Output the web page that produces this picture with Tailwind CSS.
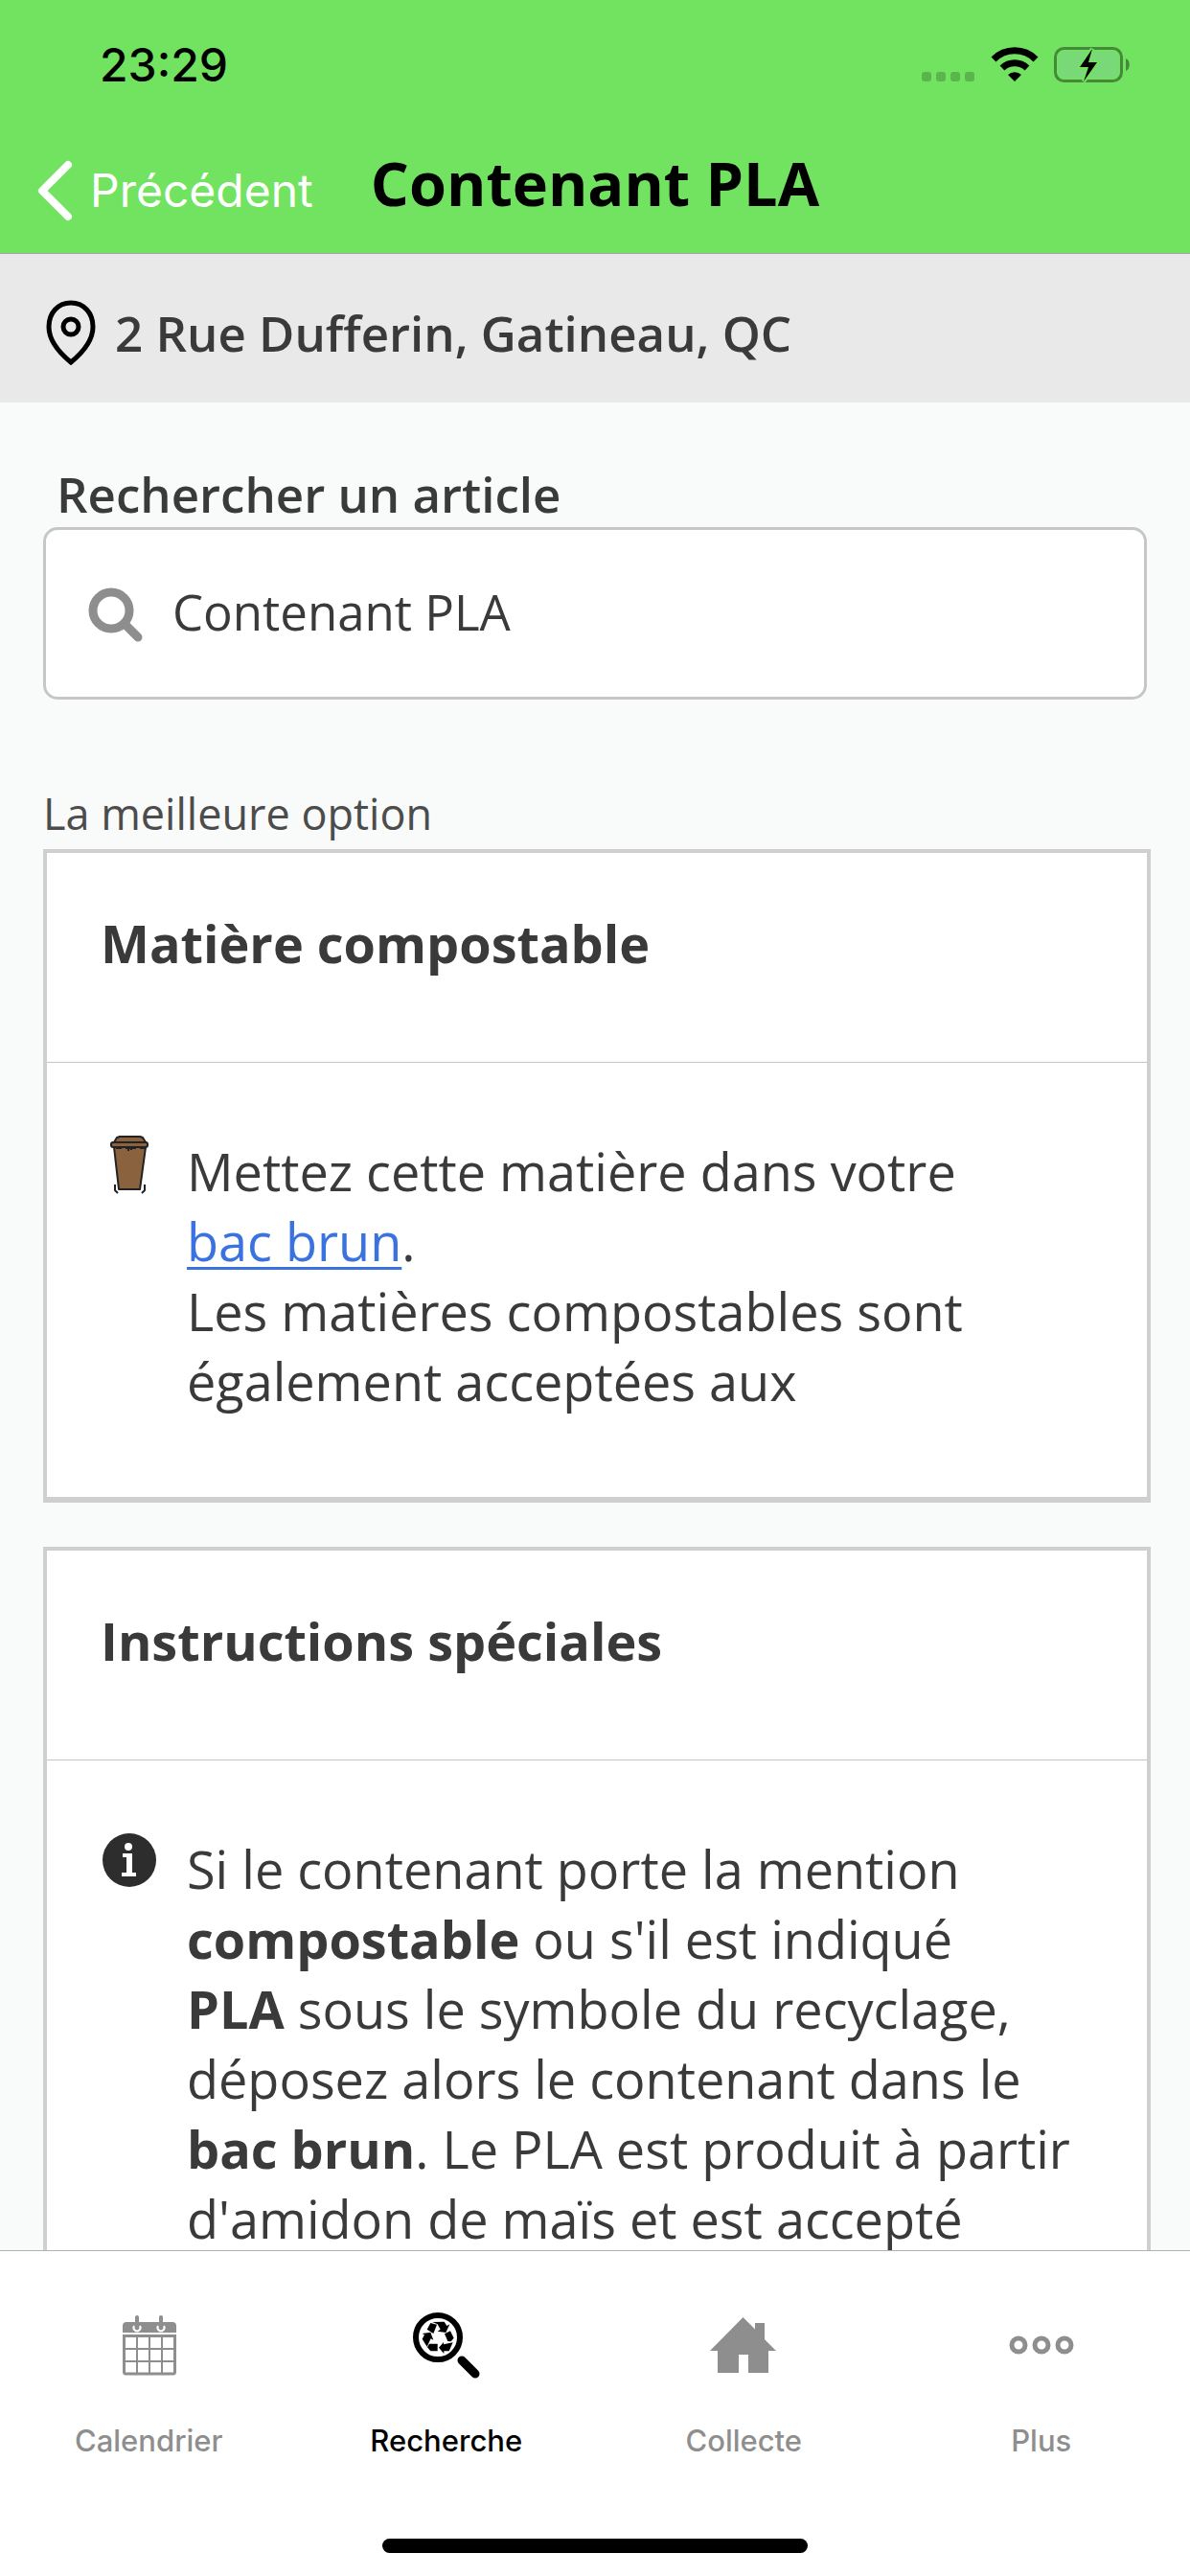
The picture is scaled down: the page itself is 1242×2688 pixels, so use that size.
<!DOCTYPE html>
<html lang="fr">
<head>
    <meta charset="UTF-8">
    <meta name="viewport" content="width=device-width, initial-scale=1.0">
    <title>Contenant PLA</title>
    <script src="https://cdn.jsdelivr.net/npm/@tailwindcss/browser@4"></script>
</head>
<body class="h-screen flex flex-col overflow-hidden bg-[#f9fbfa] text-[#3a3a3a] font-['Open_Sans','Noto_Sans',sans-serif]">
    <!-- Header -->
    <header class="shrink-0 bg-[#72e360] border-b border-[#a5a5a5] text-black">
        <div class="h-[132px] pt-1 pl-[104px] pr-[62px] flex items-center justify-between">
            <span class="text-[48px] leading-[60px] font-medium font-['Inter',sans-serif]">23:29</span>
            <div class="flex items-center gap-4">
                <svg class="w-[56px] h-[44px]" viewBox="0 0 56 44" fill="#5bb54d">
                    <rect x="0" y="29" width="10" height="10" rx="3"/>
                    <rect x="15" y="29" width="10" height="10" rx="3"/>
                    <rect x="30" y="29" width="10" height="10" rx="3"/>
                    <rect x="45" y="29" width="10" height="10" rx="3"/>
                </svg>
                <svg class="w-[50px] h-[44px]" viewBox="0 0 50 44">
                    <path d="M3 16a31 31 0 0 1 44 0" fill="none" stroke="#000" stroke-width="7"/>
                    <path d="M12 25a19 19 0 0 1 26 0" fill="none" stroke="#000" stroke-width="7"/>
                    <path d="M25 39l-7-7a10 10 0 0 1 14 0z"/>
                </svg>
                <svg class="w-[80px] h-[44px]" viewBox="0 0 80 44">
                    <rect x="1.500" y="4.500" width="69" height="34" rx="9" fill="none" stroke="#458a3a" stroke-width="3"/>
                    <rect x="5" y="8" width="62" height="27" rx="6" fill="#79d878"/>
                    <path d="M75 15c5 2 5 11 0 13z" fill="#458a3a"/>
                    <path d="M40 5L27 24h9l-5 15 14-20h-9z" fill="#000" stroke="#72e360" stroke-width="4" paint-order="stroke"/>
                </svg>
            </div>
        </div>
        <div class="relative h-[132px] flex justify-center">
            <button type="button" class="absolute left-[36px] top-[32px] flex items-center gap-4 text-white text-[48px] leading-[70px] font-['Inter',sans-serif]">
                <svg class="w-[42px] h-[66px]" viewBox="0 0 42 66" fill="none" stroke="#fff" stroke-width="8" stroke-linecap="round" stroke-linejoin="round"><path d="M35 6L8 33L35 60"/></svg>
                Précédent
            </button>
            <h1 class="pt-4 text-[63px] leading-[86px] font-bold">Contenant PLA</h1>
        </div>
    </header>

    <!-- Address -->
    <div class="shrink-0 h-[155px] px-[48px] pt-2 flex items-center gap-[20px] bg-[#e9e9e9]">
        <svg class="w-[52px] h-[68px]" viewBox="0 0 52 68" fill="none" stroke="#000" stroke-width="5"><path d="M26 3C12 3 3 14 3 28c0 15 12 28 23 37 11-9 23-22 23-37C49 14 40 3 26 3z"/><circle cx="26" cy="28" r="8"/></svg>
        <p class="text-[51px] leading-[70px] font-semibold">2 Rue Dufferin, Gatineau, QC</p>
    </div>

    <main class="flex-1 min-h-0 overflow-hidden px-[45px]">
        <form class="pt-[60px]">
            <label for="search" class="block pl-[14px] text-[51px] leading-[70px] font-semibold">Rechercher un article</label>
            <div class="h-[180px] px-[44px] flex items-center gap-[30px] bg-white border-3 border-[#c6c6c6] rounded-[15px]">
                <svg class="shrink-0 w-[58px] h-[62px]" viewBox="0 0 58 62" fill="none" stroke="#8e8e8e"><circle cx="24" cy="28" r="19" stroke-width="9"/><path d="M39 43L52 56" stroke-width="9" stroke-linecap="round"/></svg>
                <input type="text" id="search" name="search" value="Contenant PLA" class="flex-1 min-w-0 pb-1 text-[51px] leading-[70px] focus:outline-none">
            </div>
        </form>

        <p class="mt-[88px] text-[45px] leading-[62px] text-[#4c4c4c]">La meilleure option</p>

        <section class="mt-[6px] -mr-[4px] bg-white border-4 border-b-6 border-[#cfcfcf]">
            <h2 class="h-[219px] px-[56px] pt-[57px] text-[54px] leading-[74px] font-bold border-b border-[#c6c6c6]">Matière compostable</h2>
            <div class="px-[58px] pt-[76px] pb-[84px] flex gap-[32px]">
                <svg class="shrink-0 w-[56px] h-[62px]" viewBox="0 0 56 62" stroke="#222" stroke-width="2" stroke-linejoin="round" fill="#8b623e">
                    <path d="M12 12l5 44h22l6-44z"/>
                    <path d="M12 7l3-5 3-1h21l3 1 3 5z"/>
                    <rect x="9" y="7" width="38" height="5" rx="2"/>
                    <path d="M14 13h6M24 13h11M39 13h6M27 13v3M30 13v2" fill="none"/>
                    <path d="M13 51v6l3 3M44 51v6l-3 3" fill="none"/>
                </svg>
                <p class="pt-px text-[54px] leading-[73px]">Mettez cette matière dans votre<br><a href="#" class="text-[#3a73e0] underline decoration-3 underline-offset-6">bac brun</a>.<br>Les matières compostables sont<br>également acceptées aux</p>
            </div>
        </section>

        <section class="mt-[46px] -mr-[4px] bg-white border-4 border-b-6 border-[#cfcfcf]">
            <h2 class="h-[219px] px-[56px] pt-[57px] text-[54px] leading-[74px] font-bold border-b border-[#c6c6c6]">Instructions spéciales</h2>
            <div class="px-[58px] pt-[76px] pb-[84px] flex gap-[32px]">
                <svg class="shrink-0 w-[56px] h-[56px]" viewBox="0 0 56 56"><circle cx="28" cy="28" r="28" fill="#2d2d2d"/><circle cx="27" cy="14" r="4" fill="#fff"/><path d="M21 21h10v20h4v4H20v-4h5V25h-4z" fill="#fff"/></svg>
                <p class="pt-px text-[54px] leading-[73px]">Si le contenant porte la mention<br><b>compostable</b> ou s'il est indiqué<br><b>PLA</b> sous le symbole du recyclage,<br>déposez alors le contenant dans le<br><b>bac brun</b>. Le PLA est produit à partir<br>d'amidon de maïs et est accepté</p>
            </div>
        </section>
    </main>

    <!-- Tab bar -->
    <nav class="shrink-0 bg-white border-t border-[#b2b2b2] text-[#8e8e8e] text-[31px] leading-[40px] font-medium font-['Inter',sans-serif]">
        <div class="grid grid-cols-4 pt-[64px]">
            <a href="#" class="flex flex-col items-center gap-[42px]">
                <svg class="w-[72px] h-[72px]" viewBox="0 0 72 72" fill="none" stroke="#8e8e8e">
                    <path d="M9 21v-7q0-4 4-4h48q4 0 4 4v7z" fill="#8e8e8e" stroke="none"/>
                    <path d="M21 14a3.500 3.500 0 1 0 6 0M46 14a3.500 3.500 0 1 0 6 0" stroke="#fff" stroke-width="2"/>
                    <path d="M24 5v10M49 5v10" stroke-width="4" stroke-linecap="round"/>
                    <path d="M10.500 24.500h53V62q0 2-2 2h-49q-2 0-2-2z" stroke-width="3"/>
                    <path d="M24 24v40M37 24v40M50 24v40M10 38h53M10 51h53" stroke-width="2"/>
                </svg>
                Calendrier
            </a>
            <a href="#" class="flex flex-col items-center gap-[42px] text-black">
                <svg class="w-[72px] h-[72px]" viewBox="0 0 72 72">
                    <circle cx="27" cy="26" r="23" fill="none" stroke="#000" stroke-width="6"/>
                    <path d="M52 50l14 14" stroke="#000" stroke-width="9" stroke-linecap="round"/>
                    <g transform="translate(-10 -13) scale(.3333)">
                        <path d="M77 92L88 72L108 77L97 105z"/>
                        <path d="M94 69L131 68L139 81L148 76L136 102L110 98L119 92L110 76z"/>
                        <path d="M132 106L150 97L161 119L152 130L142 129z"/>
                        <path d="M114 149L129 132V139L158 133L146 160H130V168z"/>
                        <path d="M84 137H110V160H88L78 148z"/>
                        <path d="M62 105L88 101L97 125L89 121L77 146L62 122L69 109z"/>
                    </g>
                </svg>
                Recherche
            </a>
            <a href="#" class="flex flex-col items-center gap-[42px]">
                <svg class="w-[72px] h-[72px]" viewBox="0 0 72 72" fill="#8e8e8e"><path d="M35.500 5L48 17.500V11h10v17l12 12h-8v23H41V44H31v19H9V40H1z"/></svg>
                Collecte
            </a>
            <a href="#" class="flex flex-col items-center gap-[42px]">
                <svg class="w-[72px] h-[72px]" viewBox="0 0 72 72" fill="none" stroke="#8e8e8e" stroke-width="5"><circle cx="12" cy="34" r="7"/><circle cx="36" cy="34" r="7"/><circle cx="60" cy="34" r="7"/></svg>
                Plus
            </a>
        </div>
        <div class="mt-[82px] mb-6 mx-auto w-[444px] h-[15px] rounded-full bg-black"></div>
    </nav>
</body>
</html>
